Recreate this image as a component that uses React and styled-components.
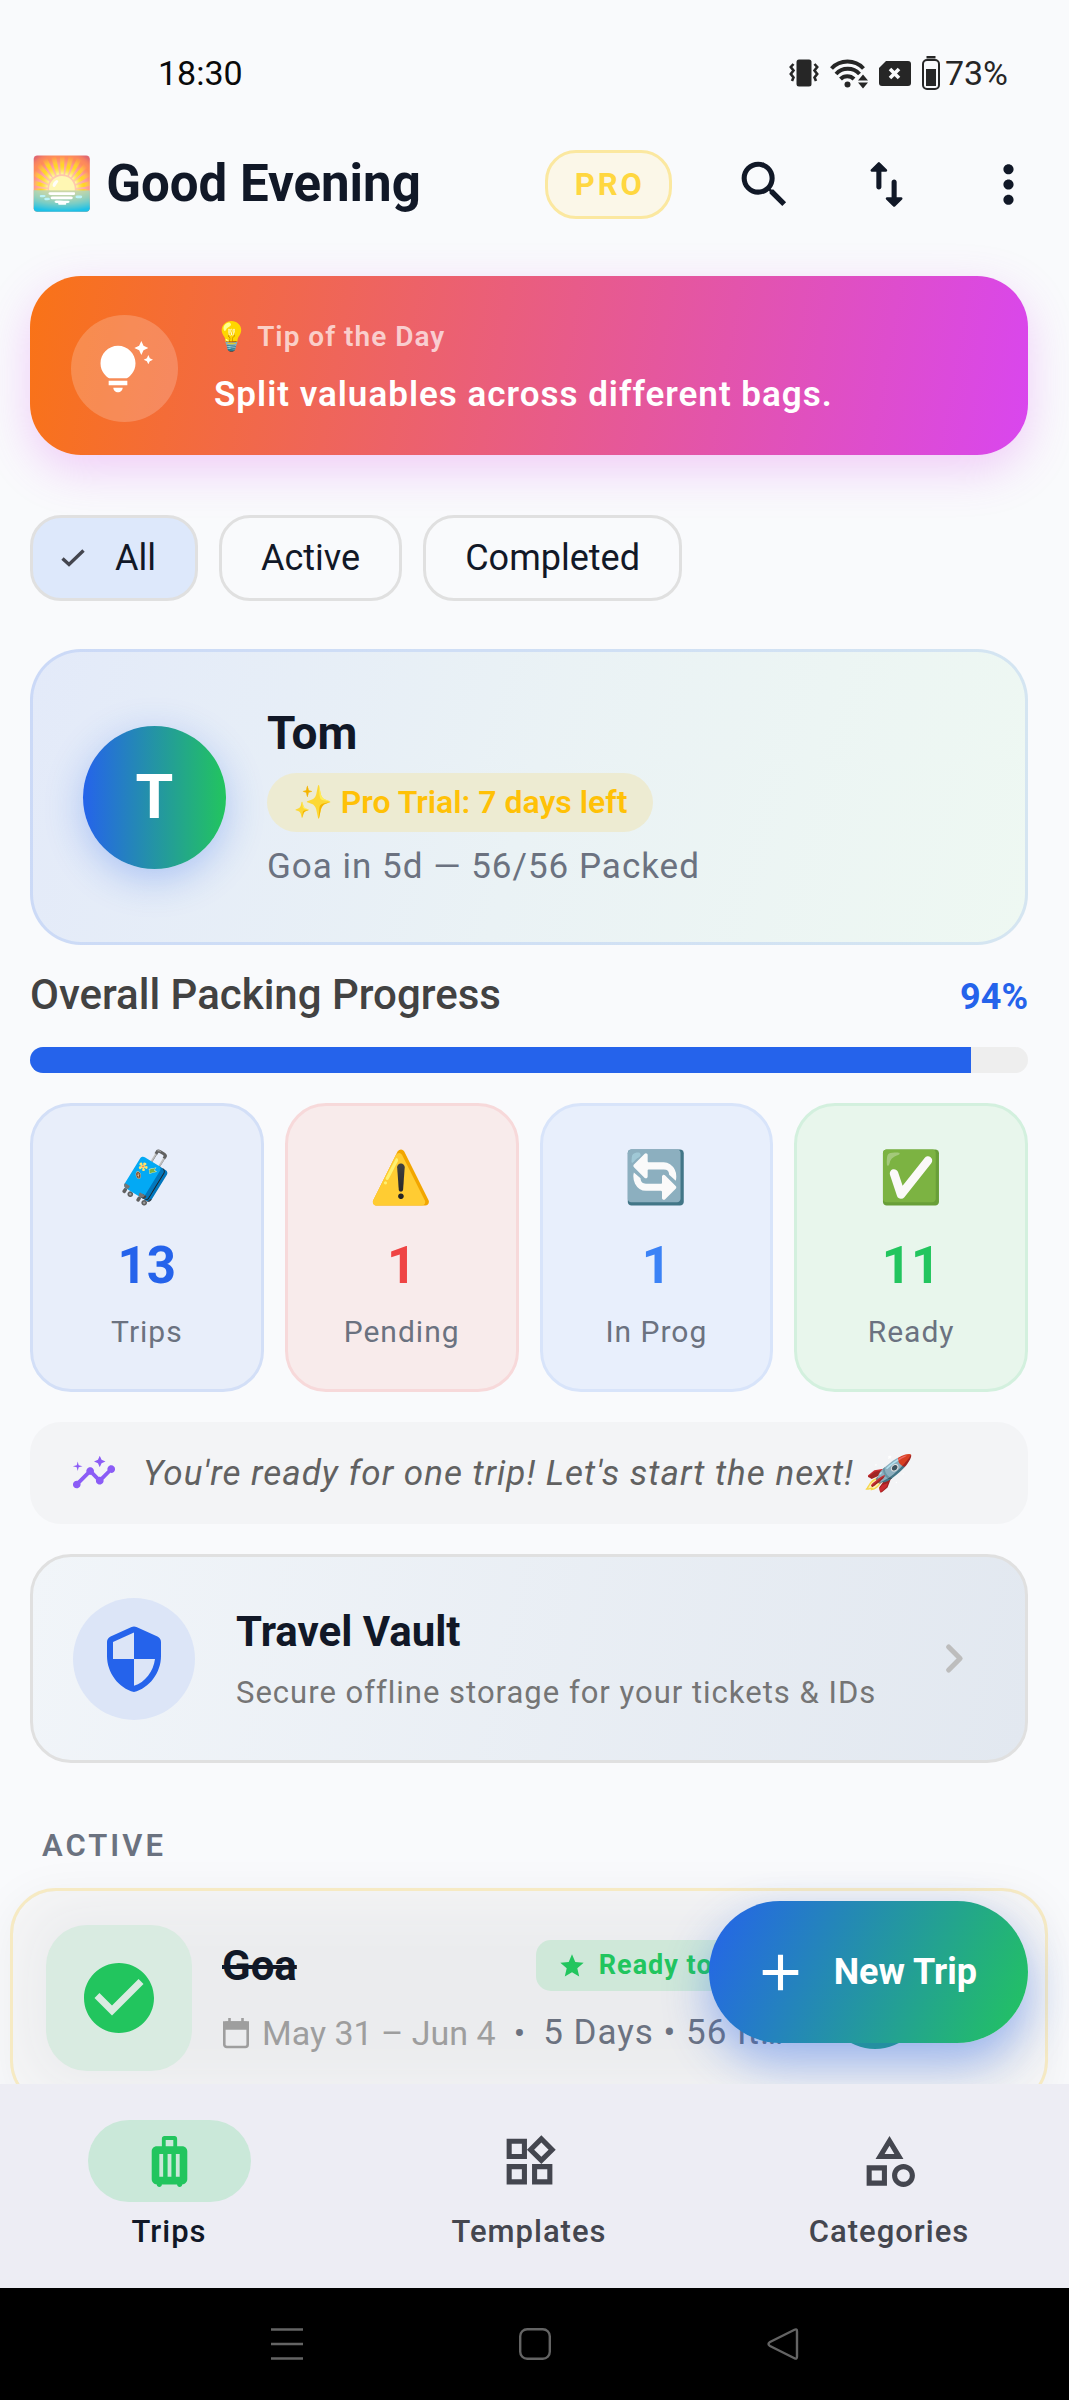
import React from "react";
import styled, { createGlobalStyle, css } from "styled-components";
import {
  MdSearch,
  MdMoreVert,
  MdTipsAndUpdates,
  MdInsights,
  MdLuggage,
  MdOutlineWidgets,
  MdOutlineCategory,
  MdCheckCircle,
  MdStar,
  MdAdd,
} from "react-icons/md";

const GlobalStyle = createGlobalStyle`
  * { box-sizing: border-box; }
  body { margin: 0; background: #f9fafc; }
  button { font: inherit; color: inherit; padding: 0; border: 0; background: none; cursor: pointer; }
  h1, h2, h3, p, ul { margin: 0; padding: 0; font-weight: inherit; font-size: inherit; }
  svg { display: block; flex: none; }
`;

const c = {
  ink: "#111827",
  gray: "#6b7280",
  blue: "#2563eb",
  green: "#22c55e",
  line: "#e0e0e0",
  nav: "#44464f",
};

const Screen = styled.div`
  display: flex;
  flex-direction: column;
  height: 100vh;
  background: #f9fafc;
  color: ${c.ink};
  font-family: Roboto, "Noto Color Emoji", "Liberation Sans", sans-serif;
`;

const StatusBar = styled.div`
  display: flex;
  align-items: center;
  height: 122px;
  padding: 24px 61px 0 158px;
  font-size: 34px;
  line-height: 40px;
  color: #262626;
`;
const Clock = styled.span`
  flex: 1;
  color: #0a0a0a;
`;
const StatusIcons = styled.div`
  display: flex;
  align-items: center;
  gap: 11px;
`;
const Battery = styled.span`
  display: flex;
  align-items: center;
  gap: 5px;
`;

const Content = styled.div`
  position: relative;
  flex: 1;
  min-height: 0;
  overflow: hidden;
`;

const Header = styled.header`
  display: flex;
  align-items: center;
  height: 124px;
  padding-left: 30px;
`;
const Greeting = styled.h1`
  flex: 1;
  font-size: 51px;
  line-height: 60px;
  font-weight: 700;
  white-space: nowrap;
`;
const ProButton = styled.button`
  height: 69px;
  margin-right: 31px;
  padding: 0 24px 0 27px;
  border: 3px solid #fbe8a0;
  border-radius: 31px;
  background: #fbf7e8;
  color: #ffd740;
  font-size: 31px;
  font-weight: 700;
  letter-spacing: 3px;
`;
const IconButton = styled.button`
  display: grid;
  place-items: center;
  width: 122px;
  height: 122px;
`;

const Main = styled.main`
  padding: 0 41px 0 30px;
`;

const TipCard = styled.section`
  display: flex;
  align-items: center;
  gap: 36px;
  min-height: 178px;
  margin-top: 30px;
  padding: 39px 41px 33px;
  border-radius: 51px;
  color: #fff;
  background: linear-gradient(100deg, #f97316, #d946ef);
  box-shadow: 0 15px 46px rgba(217, 70, 239, 0.25);
`;
const TipIcon = styled.div`
  display: grid;
  place-items: center;
  flex: none;
  width: 107px;
  height: 107px;
  border-radius: 50%;
  background: rgba(255, 255, 255, 0.2);
`;
const TipLabel = styled.p`
  margin-bottom: 19px;
  font-size: 28px;
  line-height: 34px;
  font-weight: 600;
  letter-spacing: 1px;
  color: rgba(255, 255, 255, 0.7);
`;
const TipText = styled.p`
  font-size: 35px;
  line-height: 44px;
  font-weight: 600;
  letter-spacing: 1px;
`;
const Emoji = styled.span`
  color: #fff;
`;

const Chips = styled.div`
  display: flex;
  gap: 21px;
  margin-top: 60px;
`;
const Chip = styled.button`
  display: flex;
  align-items: center;
  gap: 30px;
  height: 86px;
  padding: ${(p) => (p.$on ? "0 39px 0 28px" : "0 39px")};
  border: 3px solid ${c.line};
  border-radius: 31px;
  background: ${(p) => (p.$on ? "#dde8fb" : "transparent")};
  font-size: 36px;
  line-height: 44px;
`;

const Profile = styled.section`
  display: flex;
  align-items: center;
  gap: 41px;
  min-height: 296px;
  margin-top: 48px;
  padding: 0 50px;
  border: 3px solid rgba(37, 99, 235, 0.12);
  border-radius: 51px;
  background: linear-gradient(106deg, #e3eaf9, #eaf2f5 50%, #eef8f2) padding-box,
    linear-gradient(106deg, #e3eaf9, #eef8f2) border-box;
`;
const Avatar = styled.div`
  display: grid;
  place-items: center;
  flex: none;
  width: 143px;
  height: 143px;
  border-radius: 50%;
  color: #fff;
  background: linear-gradient(90deg, ${c.blue}, ${c.green});
  box-shadow: 0 10px 38px rgba(37, 99, 235, 0.3);
  font-size: 61px;
  font-weight: 700;
`;
const ProfileInfo = styled.div`
  display: flex;
  flex-direction: column;
  align-items: flex-start;
  gap: 10px;
`;
const Name = styled.h2`
  font-size: 46px;
  line-height: 60px;
  font-weight: 700;
`;
const Trial = styled.span`
  padding: 0 26px;
  border-radius: 31px;
  background: #edebd2;
  color: #ffc107;
  font-size: 32px;
  line-height: 59px;
  font-weight: 600;
`;
const NextTrip = styled.p`
  font-size: 35px;
  line-height: 50px;
  letter-spacing: 1px;
  color: ${c.gray};
`;

const ProgressHead = styled.div`
  display: flex;
  justify-content: space-between;
  align-items: baseline;
  height: 52px;
  margin-top: 24px;
  line-height: 52px;
`;
const ProgressTitle = styled.h2`
  font-size: 42px;
  font-weight: 500;
  color: #424242;
`;
const Percent = styled.span`
  font-size: 36px;
  font-weight: 700;
  color: ${c.blue};
`;
const Track = styled.div`
  height: 26px;
  margin-top: 26px;
  border-radius: 13px;
  overflow: hidden;
  background: #eee;
`;
const Fill = styled.div`
  height: 100%;
  background: ${c.blue};
`;

const Stats = styled.div`
  display: grid;
  grid-template-columns: repeat(4, 1fr);
  gap: 21px;
  margin-top: 30px;
`;
const Stat = styled.section`
  display: flex;
  flex-direction: column;
  align-items: center;
  min-height: 289px;
  padding-top: 42px;
  border: 3px solid ${(p) => p.$line};
  border-radius: 41px;
  background: ${(p) => p.$bg};
`;
const StatEmoji = styled.span`
  font-size: 51px;
  line-height: 60px;
`;
const StatValue = styled.strong`
  margin-top: 28px;
  font-size: 51px;
  line-height: 60px;
  font-weight: 700;
  color: ${(p) => p.$color};
`;
const StatLabel = styled.span`
  margin-top: 16px;
  font-size: 30px;
  line-height: 40px;
  letter-spacing: 1px;
  color: ${c.gray};
`;

const Insight = styled.p`
  display: flex;
  align-items: center;
  gap: 26px;
  min-height: 102px;
  margin-top: 30px;
  padding: 0 41px;
  border-radius: 31px;
  background: #f3f4f6;
  color: #616161;
  font-size: 35px;
  font-style: italic;
  letter-spacing: 1px;
`;

const Vault = styled.button`
  display: flex;
  align-items: center;
  gap: 41px;
  width: 100%;
  min-height: 209px;
  margin-top: 30px;
  padding: 0 40px;
  border: 3px solid ${c.line};
  border-radius: 41px;
  background: linear-gradient(102deg, #f1f5f9, #e2e8f0);
  text-align: left;
`;
const VaultIcon = styled.span`
  display: grid;
  place-items: center;
  flex: none;
  width: 122px;
  height: 122px;
  border-radius: 50%;
  background: #dce5f7;
`;
const VaultText = styled.span`
  display: flex;
  flex-direction: column;
  flex: 1;
  gap: 14px;
`;
const VaultTitle = styled.strong`
  font-size: 42px;
  line-height: 54px;
  font-weight: 700;
`;
const VaultNote = styled.span`
  font-size: 31px;
  line-height: 40px;
  letter-spacing: 1px;
  color: #757575;
`;

const SectionTitle = styled.h2`
  margin: 62px 0 0 12px;
  font-size: 31px;
  line-height: 42px;
  font-weight: 600;
  letter-spacing: 3px;
  color: ${c.gray};
`;

const TripCard = styled.article`
  display: flex;
  align-items: center;
  min-height: 219px;
  margin: 21px 21px 0 10px;
  padding: 0 119px 0 33px;
  border: 3px solid #f6eac3;
  border-radius: 46px;
  background: #ebecee;
  box-shadow: inset 0 0 70px #fafafa, 0 10px 50px rgba(17, 24, 39, 0.06);
`;
const TripTile = styled.div`
  display: grid;
  place-items: center;
  flex: none;
  width: 146px;
  height: 146px;
  margin-right: 30px;
  border-radius: 41px;
  background: #d9ebe1;
`;
const TripBody = styled.div`
  flex: 1;
  min-width: 0;
`;
const TripTop = styled.div`
  display: flex;
  justify-content: space-between;
  align-items: center;
  margin-bottom: 20px;
`;
const TripName = styled.h3`
  font-size: 42px;
  line-height: 51px;
  font-weight: 700;
  text-decoration: line-through;
`;
const ReadyBadge = styled.span`
  display: flex;
  align-items: center;
  gap: 13px;
  padding: 0 34px 0 22px;
  border-radius: 15px;
  background: #cfe8d9;
  color: ${c.green};
  font-size: 27px;
  line-height: 51px;
  font-weight: 700;
  letter-spacing: 1px;
`;
const TripMeta = styled.div`
  display: flex;
  align-items: center;
  font-size: 34px;
  line-height: 44px;
  white-space: nowrap;
  color: ${c.gray};
`;
const Dates = styled.span`
  margin: 0 18px 0 12px;
  color: #9e9e9e;
`;
const Details = styled.span`
  margin-left: 18px;
  font-size: 35px;
  letter-spacing: 1px;
`;
const OpenTrip = styled.button`
  flex: none;
  width: 102px;
  height: 102px;
  margin-left: 34px;
  border-radius: 50%;
  background: #24a67c;
`;

const NewTrip = styled.button`
  position: absolute;
  right: 41px;
  bottom: 41px;
  display: flex;
  align-items: center;
  gap: 23px;
  height: 142px;
  padding: 0 51px 0 41px;
  border-radius: 71px;
  background: linear-gradient(114deg, ${c.blue}, ${c.green});
  box-shadow: 0 20px 46px rgba(37, 99, 235, 0.42);
  color: #fff;
  font-size: 36px;
  font-weight: 700;
`;

const BottomNav = styled.nav`
  background: #ededf4;
`;
const NavList = styled.ul`
  display: grid;
  grid-template-columns: repeat(3, 1fr);
  height: 204px;
  margin-left: -11px;
  padding-top: 36px;
  list-style: none;
`;
const NavItem = styled.button`
  display: flex;
  flex-direction: column;
  align-items: center;
  width: 100%;
  color: ${(p) => (p.$on ? c.ink : c.nav)};
  font-size: 31px;
  line-height: 40px;
  font-weight: 500;
  letter-spacing: 1px;
`;
const NavIcon = styled.span`
  display: grid;
  place-items: center;
  width: 163px;
  height: 82px;
  margin-bottom: 10px;
  border-radius: 41px;
  ${(p) =>
    p.$on &&
    css`
      background: #cae8d9;
      color: ${c.green};
    `}
`;

const SystemBar = styled.div`
  display: flex;
  justify-content: center;
  align-items: center;
  gap: 216px;
  height: 112px;
  background: #000;
  color: #646464;
`;

const stats = [
  { emoji: "🧳", value: 13, label: "Trips", color: "#2563eb", bg: "#e8eefa", line: "#d3dff7" },
  { emoji: "⚠️", value: 1, label: "Pending", color: "#ef4444", bg: "#f8ebeb", line: "#f7d9da" },
  { emoji: "🔄", value: 1, label: "In Prog", color: "#3b82f6", bg: "#e8effc", line: "#d8e4fa" },
  { emoji: "✅", value: 11, label: "Ready", color: "#22c55e", bg: "#e8f6ec", line: "#d3f0de" },
];

const tabs = [
  { label: "Trips", Icon: MdLuggage, on: true },
  { label: "Templates", Icon: MdOutlineWidgets },
  { label: "Categories", Icon: MdOutlineCategory },
];

const progress = 94.3;

const VibrateIcon = () => (
  <svg width="30" height="28" viewBox="0 0 30 28" fill="none" stroke="currentColor" strokeWidth="2.6">
    <rect x="7.5" y="0.5" width="15" height="27" rx="2.5" fill="currentColor" stroke="none" />
    <path d="M4.5 5 1.8 8l2.7 3.5L1.8 15l2.7 3.5L3 22M25.5 5l2.7 3-2.7 3.5 2.7 3.5-2.7 3.5 1.5 3.5" />
  </svg>
);
const WifiIcon = () => (
  <svg width="38" height="31" viewBox="0 0 38 31" fill="none" stroke="currentColor" strokeWidth="4">
    <path d="M1.5 10.5a22 22 0 0 1 32 0M6 16a16 16 0 0 1 23.5 0M10.5 21a9.5 9.5 0 0 1 13.5 0" />
    <circle cx="17.5" cy="26.5" r="3" fill="currentColor" stroke="none" />
    <path d="M33 16.5l5 6H28zM33 30.5l5-6H28z" fill="currentColor" stroke="none" />
  </svg>
);
const SimIcon = () => (
  <svg width="32" height="27" viewBox="0 0 32 27">
    <path d="M7 1h22a3 3 0 0 1 3 3v19a3 3 0 0 1-3 3H3a3 3 0 0 1-3-3V8z" fill="currentColor" />
    <path d="M11 9l9 9M20 9l-9 9" stroke="#f9fafc" strokeWidth="3.6" />
  </svg>
);
const BatteryIcon = () => (
  <svg width="18" height="34" viewBox="0 0 18 34">
    <rect x="4.5" width="9" height="2.5" fill="currentColor" />
    <rect x="1" y="4" width="16" height="29" rx="4" fill="none" stroke="currentColor" strokeWidth="2" />
    <rect x="4" y="13" width="10" height="17" fill="currentColor" />
  </svg>
);
const SwapIcon = () => (
  <svg width="61" height="61" viewBox="0 0 24 24" fill="currentColor">
    <path d="M16 17.01V11c0-.55-.45-1-1-1s-1 .45-1 1v6.01h-1.79c-.45 0-.67.54-.35.85l2.79 2.78c.2.19.51.19.71 0l2.79-2.78c.32-.31.09-.85-.35-.85H16zM8.65 3.35 5.86 6.14c-.32.31-.1.85.35.85H8V13c0 .55.45 1 1 1s1-.45 1-1V6.99h1.79c.45 0 .67-.54.35-.85L9.35 3.35a.5.5 0 0 0-.7 0z" />
  </svg>
);
const CheckIcon = () => (
  <svg width="24" height="18" viewBox="0 0 24 18" fill="none" stroke="#44464f" strokeWidth="3.4">
    <path d="M1.5 9.5 8 15.5 22.5 1.5" />
  </svg>
);
const ShieldIcon = () => (
  <svg width="72" height="72" viewBox="0 0 24 24" fill={c.blue}>
    <path d="m11.19 1.36-7 3.11C3.47 4.79 3 5.51 3 6.3V11c0 5.55 3.84 10.74 9 12 5.16-1.26 9-6.45 9-12V6.3c0-.79-.47-1.51-1.19-1.83l-7-3.11c-.51-.23-1.11-.23-1.62 0zM12 11.99h7c-.53 4.12-3.28 7.79-7 8.94V12H5V6.3l7-3.11v8.8z" />
  </svg>
);
const ChevronIcon = () => (
  <svg width="61" height="61" viewBox="0 0 24 24" fill="none" stroke="#bdbdbd" strokeWidth="2" strokeLinecap="round" strokeLinejoin="round">
    <path d="m9.7 7.5 4.5 4.5-4.5 4.5" />
  </svg>
);
const CalendarIcon = () => (
  <svg width="28" height="31" viewBox="0 0 28 31" fill="none" stroke="#9e9e9e" strokeWidth="2.6">
    <rect x="2.3" y="4.5" width="23.4" height="24.5" rx="2.5" />
    <path d="M2.3 4.5h23.4v6H2.3z" fill="#9e9e9e" />
    <path d="M7.5 0v5M20.5 0v5" />
  </svg>
);
const RecentsIcon = () => (
  <svg width="32" height="32" viewBox="0 0 32 32" stroke="currentColor" strokeWidth="2.6">
    <path d="M0 1.5h32M0 16h32M0 30.5h32" />
  </svg>
);
const HomeIcon = () => (
  <svg width="32" height="32" viewBox="0 0 32 32" fill="none" stroke="currentColor" strokeWidth="2.4">
    <rect x="1.2" y="1.2" width="29.6" height="29.6" rx="7" />
  </svg>
);
const BackIcon = () => (
  <svg width="32" height="32" viewBox="0 0 32 32" fill="none" stroke="currentColor" strokeWidth="2.4" strokeLinejoin="round">
    <path d="M27.5 1.8Q30 .5 30 3.5v25q0 3-2.5 1.7L3 18q-3-2 0-4z" />
  </svg>
);

export default function App() {
  return (
    <Screen>
      <GlobalStyle />
      <StatusBar>
        <Clock>18:30</Clock>
        <StatusIcons>
          <VibrateIcon />
          <WifiIcon />
          <SimIcon />
          <Battery>
            <BatteryIcon />
            73%
          </Battery>
        </StatusIcons>
      </StatusBar>

      <Content>
        <Header>
          <Greeting>🌅 Good Evening</Greeting>
          <ProButton type="button">PRO</ProButton>
          <IconButton type="button" aria-label="Search">
            <MdSearch size={61} />
          </IconButton>
          <IconButton type="button" aria-label="Sort">
            <SwapIcon />
          </IconButton>
          <IconButton type="button" aria-label="More">
            <MdMoreVert size={61} />
          </IconButton>
        </Header>

        <Main>
          <TipCard>
            <TipIcon>
              <MdTipsAndUpdates size={56} />
            </TipIcon>
            <div>
              <TipLabel>
                <Emoji>💡</Emoji> Tip of the Day
              </TipLabel>
              <TipText>Split valuables across different bags.</TipText>
            </div>
          </TipCard>

          <Chips>
            <Chip type="button" $on aria-pressed="true">
              <CheckIcon />
              All
            </Chip>
            <Chip type="button">Active</Chip>
            <Chip type="button">Completed</Chip>
          </Chips>

          <Profile>
            <Avatar>T</Avatar>
            <ProfileInfo>
              <Name>Tom</Name>
              <Trial>✨ Pro Trial: 7 days left</Trial>
              <NextTrip>Goa in 5d — 56/56 Packed</NextTrip>
            </ProfileInfo>
          </Profile>

          <ProgressHead>
            <ProgressTitle>Overall Packing Progress</ProgressTitle>
            <Percent>94%</Percent>
          </ProgressHead>
          <Track role="progressbar" aria-label="Overall Packing Progress" aria-valuenow={94}>
            <Fill style={{ width: `${progress}%` }} />
          </Track>

          <Stats>
            {stats.map((s) => (
              <Stat key={s.label} $bg={s.bg} $line={s.line}>
                <StatEmoji>{s.emoji}</StatEmoji>
                <StatValue $color={s.color}>{s.value}</StatValue>
                <StatLabel>{s.label}</StatLabel>
              </Stat>
            ))}
          </Stats>

          <Insight>
            <MdInsights size={46} color="#8b5cf6" />
            You're ready for one trip! Let's start the next! 🚀
          </Insight>

          <Vault type="button">
            <VaultIcon>
              <ShieldIcon />
            </VaultIcon>
            <VaultText>
              <VaultTitle>Travel Vault</VaultTitle>
              <VaultNote>Secure offline storage for your tickets &amp; IDs</VaultNote>
            </VaultText>
            <ChevronIcon />
          </Vault>

          <SectionTitle>ACTIVE</SectionTitle>
        </Main>

        <TripCard>
          <TripTile>
            <MdCheckCircle size={84} color={c.green} />
          </TripTile>
          <TripBody>
            <TripTop>
              <TripName>Goa</TripName>
              <ReadyBadge>
                <MdStar size={28} />
                Ready to Go
              </ReadyBadge>
            </TripTop>
            <TripMeta>
              <CalendarIcon />
              <Dates>May 31 – Jun 4</Dates>
              <span>•</span>
              <Details>5 Days • 56 It…</Details>
            </TripMeta>
          </TripBody>
          <OpenTrip type="button" aria-label="Open trip" />
        </TripCard>

        <NewTrip type="button">
          <MdAdd size={61} />
          New Trip
        </NewTrip>
      </Content>

      <BottomNav>
        <NavList>
          {tabs.map(({ label, Icon, on }) => (
            <li key={label}>
              <NavItem type="button" $on={on}>
                <NavIcon $on={on}>
                  <Icon size={61} />
                </NavIcon>
                {label}
              </NavItem>
            </li>
          ))}
        </NavList>
      </BottomNav>

      <SystemBar>
        <RecentsIcon />
        <HomeIcon />
        <BackIcon />
      </SystemBar>
    </Screen>
  );
}
